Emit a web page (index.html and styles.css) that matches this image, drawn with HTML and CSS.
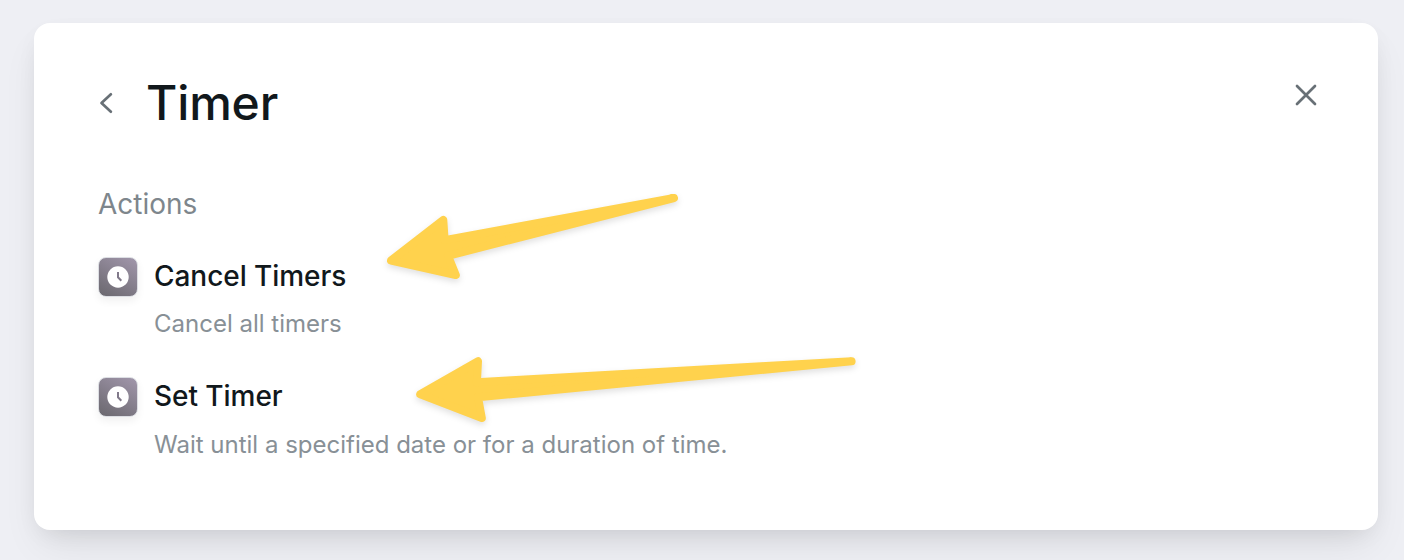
FILE: index.html
```html
<!DOCTYPE html>
<html lang="en">
<head>
<meta charset="utf-8">
<title>Timer</title>
<link rel="stylesheet" href="styles.css">
</head>
<body>
<main class="card">
  <header class="header">
    <button class="icon-button back" aria-label="Back">
      <svg width="16" height="24" viewBox="0 0 16 24"><path d="M12.9 3.3 3.5 12 12.9 20.7"/></svg>
    </button>
    <h1 class="title">Timer</h1>
    <button class="icon-button close" aria-label="Close">
      <svg width="24" height="24" viewBox="0 0 24 24"><path d="M3 3 21 21M21 3 3 21"/></svg>
    </button>
  </header>
  <h2 class="section">Actions</h2>
  <ul class="actions">
    <li class="action">
      <span class="tile"><svg width="22" height="22" viewBox="0 0 22 22"><circle cx="11" cy="11" r="10.7"/><path d="M11 6v5.3l3.3 3.4"/></svg></span>
      <div class="text">
        <h3 class="name">Cancel Timers</h3>
        <p class="description">Cancel all timers</p>
      </div>
    </li>
    <li class="action">
      <span class="tile"><svg width="22" height="22" viewBox="0 0 22 22"><circle cx="11" cy="11" r="10.7"/><path d="M11 6v5.3l3.3 3.4"/></svg></span>
      <div class="text">
        <h3 class="name">Set Timer</h3>
        <p class="description">Wait until a specified date or for a duration of time.</p>
      </div>
    </li>
  </ul>
</main>
<svg class="arrows" width="1404" height="560" viewBox="0 0 1404 560" aria-hidden="true">
  <path d="M391 260.5 443.3 220 444.6 240.1 674 198 448 255.8 455.8 275Z"/>
  <path d="M420.2 394.3 478 361.2 476.9 382.2 851.6 361.3 478 397.3 481.8 418Z"/>
</svg>
</body>
</html>
```

FILE: styles.css
```css
* {
  box-sizing: border-box;
}

body {
  margin: 0;
  height: 560px;
  padding: 23px 26px 30px 34px;
  overflow: hidden;
  background: #eeeff4;
  font-family: Inter, "Liberation Sans", sans-serif;
  color: #11181c;
}

.card {
  height: 507px;
  padding: 50px 60px 0 64px;
  border-radius: 16px;
  background: #fff;
  box-shadow: 0 20px 40px -8px rgba(0, 0, 0, 0.09), 0 8px 24px -8px rgba(0, 0, 0, 0.1);
}

h1, h2, h3, p, ul {
  margin: 0;
  padding: 0;
}

.header {
  display: flex;
  height: 60px;
}

.icon-button {
  display: flex;
  padding: 0;
  border: 0;
  background: none;
}

.icon-button path {
  fill: none;
  stroke: #687076;
  stroke-width: 2.7;
  stroke-linecap: round;
  stroke-linejoin: round;
}

.back {
  margin-top: 18px;
}

.title {
  flex: 1;
  margin-left: 32px;
  font-size: 48px;
  font-weight: 500;
  line-height: 60px;
  letter-spacing: -0.15px;
}

.close {
  margin-top: 10px;
}

.section {
  margin-top: 53px;
  font-size: 28px;
  font-weight: 400;
  line-height: 36px;
  color: #7e868c;
}

.actions {
  margin-top: 35px;
  list-style: none;
}

.action {
  display: flex;
  height: 120px;
  gap: 16px;
}

.tile {
  display: flex;
  width: 40px;
  height: 40px;
  align-items: center;
  justify-content: center;
  border: 1px solid #dcdee3;
  border-radius: 8px;
  background: linear-gradient(30deg, #68666c, #a398ad) border-box;
  box-shadow: 0 4px 8px rgba(0, 0, 0, 0.06);
}

.tile circle {
  fill: #fff;
}

.tile path {
  fill: none;
  stroke: #81798a;
  stroke-width: 2;
}

.name {
  font-size: 28px;
  font-weight: 500;
  line-height: 38px;
  letter-spacing: -0.05px;
}

.description {
  margin-top: 14px;
  font-size: 24px;
  line-height: 30px;
  color: #889096;
}

.action:last-child .description {
  margin-top: 15px;
}

.arrows {
  position: absolute;
  top: 0;
  left: 0;
  pointer-events: none;
  filter: drop-shadow(0 3px 3px rgba(0, 0, 0, 0.12));
}

.arrows path {
  fill: #ffd24d;
  stroke: #ffd24d;
  stroke-width: 8;
  stroke-linejoin: round;
}
```
